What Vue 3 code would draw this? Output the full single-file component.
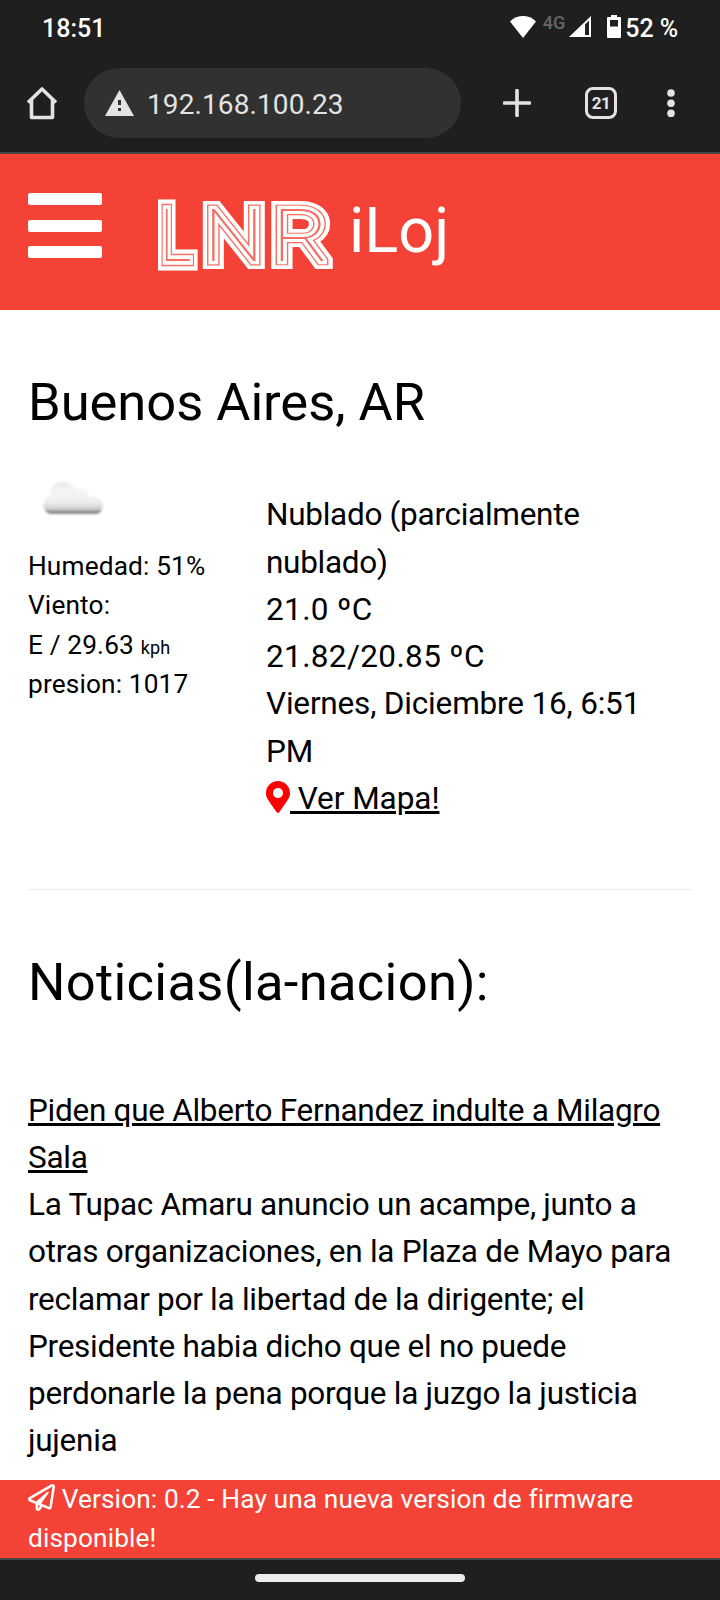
<template>
  <div class="phone">
    <div class="status-bar">
      <span class="clock">18:51</span>
      <div class="status-icons">
        <svg class="wifi" width="26" height="22" viewBox="0 0 26 22">
          <path d="M0 5.5C7.5-1.8 18.5-1.8 26 5.5L13 22z" fill="#fff" />
        </svg>
        <span class="network">4G</span>
        <svg class="signal" width="22" height="21" viewBox="0 0 22 21">
          <path d="M22 0v21H0zM16 8.4V19h4V4.4z" fill="#fff" fill-rule="evenodd" />
        </svg>
        <svg class="battery" width="14" height="23" viewBox="0 0 14 23">
          <path d="M4 0h6v2h3a1 1 0 0 1 1 1v19a1 1 0 0 1-1 1H1a1 1 0 0 1-1-1V3a1 1 0 0 1 1-1h3zM3 5v6.5h8V5z" fill="#fff" fill-rule="evenodd" />
        </svg>
        <span class="percent">52 %</span>
      </div>
    </div>

    <div class="browser-bar">
      <svg class="home" width="32" height="33" viewBox="0 0 32 33">
        <path d="M2 15.5L16 2l14 13.5M5.5 13v17.5h21V13" fill="none" stroke="#e3e3e3" stroke-width="3.6" stroke-linejoin="round" />
      </svg>
      <div class="url-box">
        <svg width="29" height="26" viewBox="0 0 29 26">
          <path d="M14.5 0L29 26H0zM13 10v5h3v-5zM13 18v3h3v-3z" fill="#e3e3e3" fill-rule="evenodd" />
        </svg>
        <span class="url">{{ url }}</span>
      </div>
      <svg class="plus" width="28" height="28" viewBox="0 0 28 28">
        <path d="M14 1.5v25M1.5 14h25" stroke="#e3e3e3" stroke-width="3.6" stroke-linecap="round" />
      </svg>
      <div class="tabs">21</div>
      <svg class="dots" width="8" height="28" viewBox="0 0 8 28">
        <circle v-for="cy in [4, 14.2, 24.4]" :key="cy" cx="4" :cy="cy" r="3.8" fill="#e3e3e3" />
      </svg>
    </div>

    <header class="header">
      <button class="menu" aria-label="Menu">
        <span></span>
        <span></span>
        <span></span>
      </button>
      <svg class="logo" width="180" height="70" viewBox="0 0 180 70">
        <g v-for="letra in logo" :key="letra.texto" :transform="letra.transform">
          <text
            v-for="(trazo, i) in trazos"
            :key="i"
            class="logo-text"
            :fill="trazo.color"
            :stroke="trazo.color"
            :stroke-width="trazo.grosor"
          >{{ letra.texto }}</text>
        </g>
      </svg>
      <span class="title">iLoj</span>
    </header>

    <main class="content">
      <h2>Buenos Aires, AR</h2>
      <div class="weather">
        <div class="details">
          <svg class="cloud" width="66" height="40" viewBox="0 0 66 40">
            <defs>
              <linearGradient id="nube" x1="0" y1="0" x2="0" y2="1">
                <stop offset="0" stop-color="#ebebeb" />
                <stop offset="0.35" stop-color="#f5f5f5" />
                <stop offset="0.65" stop-color="#ededed" />
                <stop offset="0.85" stop-color="#cfcfcf" />
                <stop offset="0.94" stop-color="#808080" />
                <stop offset="1" stop-color="#999" />
              </linearGradient>
              <filter id="suave"><feGaussianBlur stdDeviation="0.8" /></filter>
            </defs>
            <path d="M10 35C1 32 1 20 10 17C10 5 19 1 26 3C31 4 34 8 35 11C41 8 47 11 49 18C57 16 63 20 63 27C62 32 60 35 56 35z" fill="url(#nube)" filter="url(#suave)" />
          </svg>
          <div>Humedad: 51%</div>
          <div>Viento:</div>
          <div>E / 29.63 <span class="unit">kph</span></div>
          <div>presion: 1017</div>
        </div>
        <div class="forecast">
          <div>Nublado (parcialmente nublado)</div>
          <div class="temp">21.0 ºC</div>
          <div class="temp">21.82/20.85 ºC</div>
          <div class="date">Viernes, Diciembre 16, 6:51 PM</div>
          <a class="map"><svg width="24" height="32" viewBox="0 0 384 512"><path fill="red" d="M172.268 501.67C26.97 291.031 0 269.413 0 192 0 85.961 85.961 0 192 0s192 85.961 192 192c0 77.413-26.97 99.031-172.268 309.67-9.535 13.774-29.93 13.773-39.464 0zM192 272c44.183 0 80-35.817 80-80s-35.817-80-80-80-80 35.817-80 80 35.817 80 80 80z" /></svg>&nbsp;Ver Mapa!</a>
        </div>
      </div>
      <hr />
      <h2 class="news-title">Noticias(la-nacion):</h2>
      <article v-for="noticia in noticias" :key="noticia.titulo" class="news">
        <a>{{ noticia.titulo }}</a>
        <div>{{ noticia.texto }}</div>
      </article>
    </main>

    <footer class="footer">
      <svg width="27" height="27" viewBox="0 0 512 512"><path fill="#fff" d="M440 6.5L24 246.4c-34.4 19.9-31.1 70.8 5.7 85.9L144 379.6V464c0 46.4 59.2 65.5 86.6 28.6l43.8-59.1 111.9 46.2c5.9 2.4 12.1 3.6 18.3 3.6 8.2 0 16.3-2.1 23.6-6.2 12.8-7.2 21.6-20 23.9-34.5l59.4-387.2c6.1-40.1-36.9-68.8-71.5-48.9zM192 464v-64.6l36.6 15.1L192 464zm212.6-28.7l-153.8-63.5L391 169.5c10.7-15.5-9.5-33.5-23.7-21.2L155.8 332.6 48 288 464 48l-59.4 387.3z" /></svg>
      Version: 0.2 - Hay una nueva version de firmware disponible!
    </footer>
    <div class="nav-bar"><div class="handle"></div></div>
  </div>
</template>

<script setup>
import { ref } from 'vue';

const url = ref('192.168.100.23');

const noticias = ref([
  {
    titulo: 'Piden que Alberto Fernandez indulte a Milagro Sala',
    texto: 'La Tupac Amaru anuncio un acampe, junto a otras organizaciones, en la Plaza de Mayo para reclamar por la libertad de la dirigente; el Presidente habia dicho que el no puede perdonarle la pena porque la juzgo la justicia jujenia'
  }
]);

const logo = [
  { texto: 'L', transform: 'translate(2 61) scale(0.98 1.18)' },
  { texto: 'N', transform: 'translate(46 61) scale(1.36 1.18)' },
  { texto: 'R', transform: 'translate(114.5 61) scale(1.4 1.18)' }
];

// de afuera hacia adentro, cada capa tapa a la anterior
const trazos = [
  { color: '#fff', grosor: 17.5 },
  { color: '#f66d62', grosor: 9.6 },
  { color: '#fff', grosor: 7 },
  { color: '#f66d62', grosor: 0 }
];
</script>

<style>
body {
  margin: 0;
}
</style>

<style scoped>
.phone {
  width: 720px;
  height: 1600px;
  display: flex;
  flex-direction: column;
  overflow: hidden;
  background: #fff;
  color: #000;
  font-family: Roboto, sans-serif;
  font-size: 31.5px;
  line-height: 1.5;
}

.status-bar {
  height: 56px;
  flex: none;
  box-sizing: border-box;
  padding: 2px 42px 0;
  display: flex;
  align-items: center;
  justify-content: space-between;
  background: #1f1f1f;
  color: #fff;
  font-size: 25px;
  font-weight: 500;
}

.status-icons {
  display: flex;
  align-items: center;
}

.wifi {
  margin-top: -4px;
}

.network {
  margin: -13px 4px 0 7px;
  color: #666;
  font-size: 18px;
}

.signal {
  margin: -5px 16px 0 0;
}

.battery {
  margin: -5px 4px 0 0;
}

.percent {
  letter-spacing: -0.1px;
}

.browser-bar {
  height: 98px;
  flex: none;
  box-sizing: border-box;
  padding: 12px 45px 14px 26px;
  display: flex;
  align-items: center;
  background: #1f1f1f;
  border-bottom: 2px solid #464646;
}

.url-box {
  width: 377px;
  height: 70px;
  box-sizing: border-box;
  margin-left: 26px;
  padding-left: 21px;
  display: flex;
  align-items: center;
  gap: 13px;
  border-radius: 35px;
  background: #313131;
  color: #e3e3e3;
  font-size: 28px;
}

.url {
  padding-top: 3px;
  letter-spacing: 0.1px;
}

.plus {
  margin-left: 42px;
}

.tabs {
  width: 32px;
  height: 32px;
  box-sizing: border-box;
  margin: 0 50px 0 54px;
  border: 3.5px solid #e3e3e3;
  border-radius: 8px;
  color: #e3e3e3;
  font-size: 17px;
  font-weight: 700;
  line-height: 26px;
  letter-spacing: -0.5px;
  text-align: center;
}

.header {
  height: 156px;
  flex: none;
  display: flex;
  align-items: flex-start;
  background: #f44336;
  color: #fff;
}

.menu {
  width: 74px;
  margin: 39px 0 0 28px;
  padding: 0;
  display: flex;
  flex-direction: column;
  gap: 14.5px;
  border: 0;
  background: none;
}

.menu span {
  height: 12px;
  border-radius: 2px;
  background: #fff;
}

.logo {
  margin: 46px 0 0 56px;
  overflow: visible;
}

.logo-text {
  font-family: Roboto, sans-serif;
  font-size: 62px;
  font-weight: 100;
  stroke-linejoin: miter;
  stroke-miterlimit: 1.5;
  vector-effect: non-scaling-stroke;
}

.title {
  margin: 30px 0 0 11px;
  font-size: 63px;
}

.content {
  height: 1170px;
  box-sizing: border-box;
  padding: 53px 28px 0;
  overflow: hidden;
  letter-spacing: -0.28px;
}

h2 {
  margin: 0;
  font-size: 52.5px;
  font-weight: 400;
  letter-spacing: -0.05px;
}

.news-title {
  letter-spacing: 0.3px;
}

.weather {
  height: 447px;
  display: flex;
}

.details {
  width: 238px;
  padding-top: 37px;
  font-size: 26.25px;
  letter-spacing: 0.14px;
}

.cloud {
  display: block;
  margin: 0 0 28px 12px;
}

.unit {
  font-size: 18px;
}

.forecast {
  width: 390px;
  padding-top: 49.5px;
}

.temp {
  letter-spacing: 0.36px;
}

.date {
  letter-spacing: -0.18px;
}

.map {
  text-decoration: underline;
  letter-spacing: -0.05px;
}

.map svg {
  vertical-align: -4px;
}

hr {
  height: 1px;
  margin: 0 0 53px;
  border: 0;
  background: #eee;
}

.news {
  margin-top: 65px;
}

.news a {
  text-decoration: underline;
}

.footer {
  height: 78px;
  flex: none;
  box-sizing: border-box;
  padding: 0 28px;
  background: #f44336;
  color: #fff;
  font-size: 26.25px;
  letter-spacing: 0.12px;
}

.footer svg {
  vertical-align: -3px;
}

.nav-bar {
  height: 42px;
  flex: none;
  box-sizing: border-box;
  padding-top: 14px;
  background: #1f1f1f;
  border-top: 2px solid #464646;
}

.handle {
  width: 210px;
  height: 8px;
  margin: 0 auto;
  border-radius: 4px;
  background: #ececec;
}
</style>
